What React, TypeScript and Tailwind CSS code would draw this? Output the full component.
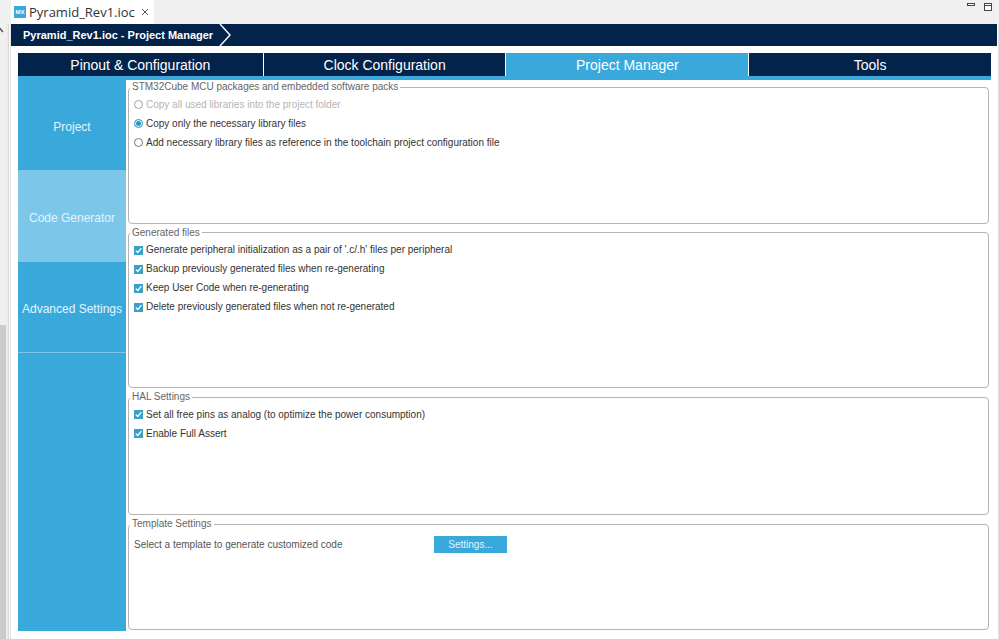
import { useState } from "react";
import type { ReactNode } from "react";

const tabs = ["Pinout & Configuration", "Clock Configuration", "Project Manager", "Tools"];
const sections = ["Project", "Code Generator", "Advanced Settings"];
const modes = [
  "Copy all used libraries into the project folder",
  "Copy only the necessary library files",
  "Add necessary library files as reference in the toolchain project configuration file",
];

function Group({ title, children }: { title: string; children: ReactNode }) {
  return (
    <fieldset className="min-w-0 rounded-[4px] border border-[#b4b4b4]">
      <legend className="ml-px px-[2px] text-[#666666]">{title}</legend>
      <div className="pt-px pl-[5px]">{children}</div>
    </fieldset>
  );
}

function RadioRow({ label, checked, disabled, onSelect }: { label: string; checked: boolean; disabled?: boolean; onSelect: () => void }) {
  return (
    <label className={`flex h-[19px] w-fit items-center gap-[3px] ${disabled ? "text-[#b5b5b5]" : "text-[#333333]"}`}>
      <input
        type="radio"
        name="packages"
        checked={checked}
        disabled={disabled}
        onChange={onSelect}
        className="size-[9px] shrink-0 appearance-none rounded-full border border-[#777777] bg-white checked:border-[#39a9dc] checked:bg-[#2f95b8] checked:shadow-[inset_0_0_0_1px_white] disabled:border-[#a0a0a0]"
      />
      <span>{label}</span>
    </label>
  );
}

function CheckRow({ label }: { label: string }) {
  return (
    <label className="flex h-[19px] w-fit items-center gap-[3px] text-[#333333]">
      <span className="grid size-[9px] shrink-0">
        <input
          type="checkbox"
          defaultChecked
          className="peer col-start-1 row-start-1 size-[9px] appearance-none border border-[#39a0c8] bg-white checked:bg-[#39a0c8]"
        />
        <svg
          viewBox="0 0 9 9"
          className="pointer-events-none invisible col-start-1 row-start-1 size-[9px] peer-checked:visible"
          fill="none"
          stroke="white"
          strokeWidth="1.3"
        >
          <path d="M1.8 4.6 3.8 6.5 7.4 2.2" />
        </svg>
      </span>
      <span>{label}</span>
    </label>
  );
}

export default function App() {
  const [tab, setTab] = useState(2);
  const [section, setSection] = useState(1);
  const [mode, setMode] = useState(1);

  return (
    <div className="flex h-screen overflow-hidden bg-white font-['Liberation_Sans',Arial,sans-serif] text-[10px] leading-[14px]">
      <aside className="flex w-[11px] shrink-0 flex-col bg-[#f0f0f0]">
        <div className="h-6 shrink-0" />
        <div className="flex min-h-0 flex-1 border-r border-[#e2e2e2]">
          <div className="flex w-[6px] flex-col">
            <svg viewBox="0 0 6 12" className="h-3 w-[6px]" fill="none" stroke="#444444" strokeWidth="1.2">
              <path d="M-2 7 0 4.500 3 8" />
            </svg>
            <div className="flex-[289]" />
            <div className="flex-[314] bg-[#cbcbcb]" />
          </div>
          <div className="w-[3px] border-r border-[#d8d8d8] bg-[#ececec]" />
          <div className="flex-1 bg-[#fafafa]" />
        </div>
      </aside>

      <div className="flex min-w-0 flex-1 flex-col">
        <header className="flex h-6 shrink-0 justify-between bg-[#f0f0f0]">
          <div className="flex items-center bg-white pr-[5px] pl-[3px]">
            <svg viewBox="0 0 12 12" className="size-3" role="img" aria-label="MX">
              <rect width="12" height="12" fill="#3aa9d8" />
              <text x="6" y="8" textAnchor="middle" fontSize="6" fontWeight="bold" fill="#ffffff">
                MX
              </text>
            </svg>
            <span className="ml-[3px] font-['Open_Sans',sans-serif] text-[13px] leading-6 text-[#333333]">Pyramid_Rev1.ioc</span>
            <button aria-label="Close" className="ml-[6px]">
              <svg viewBox="0 0 8 8" className="size-2" fill="none" stroke="#555555" strokeWidth="1">
                <path d="M1 1 7 7M7 1 1 7" />
              </svg>
            </button>
          </div>
          <div className="flex items-start gap-[9px] pt-[2px] pr-[7px]">
            <button aria-label="Minimize">
              <svg viewBox="0 0 8 9" className="h-[9px] w-2" fill="white" stroke="#444444">
                <rect x="0.5" y="1.5" width="7" height="2" />
              </svg>
            </button>
            <button aria-label="Maximize">
              <svg viewBox="0 0 8 9" className="h-[9px] w-2" fill="white" stroke="#444444">
                <rect x="0.5" y="1.5" width="7" height="7" />
                <path d="M0 3.500H8" />
              </svg>
            </button>
          </div>
        </header>

        <div className="flex min-h-0 flex-1 flex-col border-r border-[#e0e0e0] pr-px">
          <nav className="flex h-[22px] shrink-0 items-center bg-[#03234b] pl-3 text-white">
            <a href="#project" className="text-[11px] font-bold">Pyramid_Rev1.ioc - Project Manager</a>
            <svg viewBox="0 0 14 22" className="ml-[5px] h-[22px] w-[14px]" fill="none" stroke="white" strokeWidth="1.4">
              <path d="M2 0 12 11 2 22" />
            </svg>
          </nav>

          <main className="flex min-h-0 flex-1 flex-col pt-[7px] pr-[6px] pb-2 pl-[7px]">
            <div role="tablist" className="grid shrink-0 grid-cols-[245fr_242fr_242fr_242fr] gap-px border-b-4 border-[#39a9dc]">
              {tabs.map((t, i) => (
                <button
                  key={t}
                  role="tab"
                  aria-selected={tab === i}
                  onClick={() => setTab(i)}
                  className={`h-[23px] pt-[2px] text-[14px] leading-[21px] text-white ${tab === i ? "bg-[#39a9dc]" : "bg-[#03234b]"}`}
                >
                  {t}
                </button>
              ))}
            </div>

            <div className="flex min-h-0 flex-1">
              <nav className="flex w-[108px] shrink-0 flex-col bg-[#39a9dc]">
                {sections.map((s, i) => (
                  <button
                    key={s}
                    onClick={() => setSection(i)}
                    className={`h-[91px] border-b border-[#7cc6ea] pt-1 text-[12px] leading-4 whitespace-nowrap text-[#e2f4fc] ${section === i ? "bg-[#7cc6ea]" : ""}`}
                  >
                    {s}
                  </button>
                ))}
              </nav>

              <div className="grid min-w-0 flex-1 grid-rows-[144fr_163fr_125fr_113fr] gap-[2px] pr-[2px] pb-px pl-[2px]">
                <Group title="STM32Cube MCU packages and embedded software packs">
                  {modes.map((m, i) => (
                    <RadioRow key={m} label={m} checked={mode === i} disabled={i === 0} onSelect={() => setMode(i)} />
                  ))}
                </Group>
                <Group title="Generated files">
                  <CheckRow label="Generate peripheral initialization as a pair of '.c/.h' files per peripheral" />
                  <CheckRow label="Backup previously generated files when re-generating" />
                  <CheckRow label="Keep User Code when re-generating" />
                  <CheckRow label="Delete previously generated files when not re-generated" />
                </Group>
                <Group title="HAL Settings">
                  <CheckRow label="Set all free pins as analog (to optimize the power consumption)" />
                  <CheckRow label="Enable Full Assert" />
                </Group>
                <Group title="Template Settings">
                  <div className="flex items-center pt-1 text-[#555555]">
                    <span className="w-[300px]">Select a template to generate customized code</span>
                    <button className="h-[17px] w-[73px] bg-[#39a9dc] text-[#e2f4fc]">Settings...</button>
                  </div>
                </Group>
              </div>
            </div>
          </main>
        </div>
      </div>
    </div>
  );
}
